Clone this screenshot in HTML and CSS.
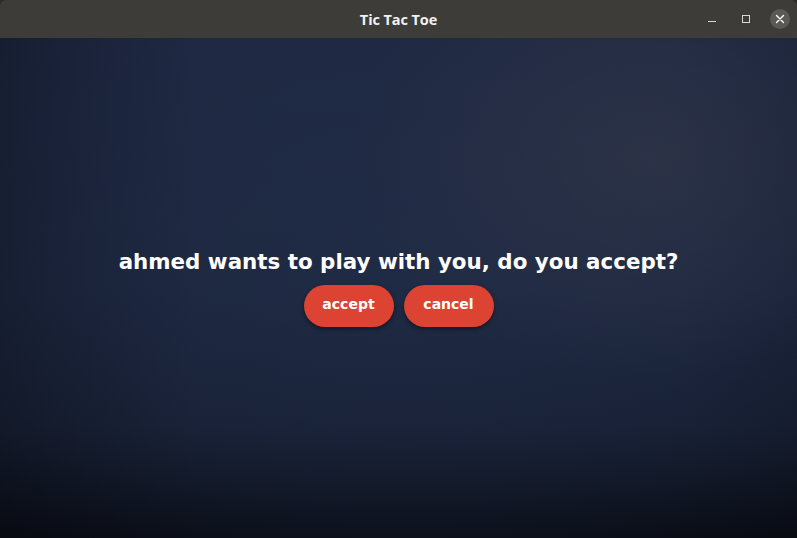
FILE: index.html
```html
<!DOCTYPE html>
<html lang="en">
<head>
<meta charset="utf-8">
<title>Tic Tac Toe</title>
<link rel="stylesheet" href="styles.css">
</head>
<body>
<div class="window">
  <header class="titlebar">
    <span class="title">Tic Tac Toe</span>
    <div class="controls">
      <span class="ctl minimize"><svg width="10" height="10" viewBox="0 0 10 10"><rect x="1" y="7" width="8" height="1" fill="#d8d8d6"/></svg></span>
      <span class="ctl maximize"><svg width="10" height="10" viewBox="0 0 10 10"><rect x="1.5" y="1.5" width="7" height="7" fill="none" stroke="#d8d8d6" stroke-width="1"/></svg></span>
      <span class="ctl close"><svg width="10" height="10" viewBox="0 0 10 10"><path d="M1.5 1.5 L8.5 8.5 M8.5 1.5 L1.5 8.5" stroke="#ffffff" stroke-width="1.4" stroke-linecap="round"/></svg></span>
    </div>
  </header>
  <main class="stage">
    <h1 class="prompt">ahmed wants to play with you, do you accept?</h1>
    <div class="actions">
      <button class="pill">accept</button>
      <button class="pill">cancel</button>
    </div>
  </main>
</div>
</body>
</html>
```

FILE: styles.css
```css
html, body {
  margin: 0;
  padding: 0;
  height: 100%;
  background: #2c2b29;
}
.window {
  height: 538px;
  display: flex;
  flex-direction: column;
  overflow: hidden;
  border-radius: 6px 6px 0 0;
}
.titlebar {
  height: 38px;
  flex: none;
  background: #3d3c39;
  display: flex;
  align-items: center;
  justify-content: center;
  position: relative;
}
.title {
  font-family: "Open Sans", "DejaVu Sans", sans-serif;
  font-weight: 700;
  font-size: 14.5px;
  color: #f2f2f2;
  letter-spacing: -0.1px;
  padding-top: 1px;
}
.controls {
  position: absolute;
  right: 7px;
  top: 0;
  height: 38px;
  display: flex;
  align-items: center;
  gap: 14px;
}
.ctl {
  width: 20px;
  height: 20px;
  display: flex;
  align-items: center;
  justify-content: center;
}
.close {
  background: #5b5a57;
  border-radius: 50%;
}
.stage {
  flex: 1;
  display: flex;
  flex-direction: column;
  align-items: center;
  justify-content: center;
  gap: 11px;
  background:
    radial-gradient(ellipse 300px 220px at 650px 120px, rgba(60,62,75,0.45), rgba(60,62,75,0) 100%),
    radial-gradient(ellipse 520px 380px at 400px 230px, rgba(34,46,74,0.55), rgba(34,46,74,0) 100%),
    linear-gradient(90deg, rgba(8,10,18,0.35) 0%, rgba(8,10,18,0) 25%, rgba(8,10,18,0) 85%, rgba(8,10,18,0.15) 100%),
    linear-gradient(180deg, #1e2842 0%, #1c263e 50%, #161e31 78%, #080b12 100%);
}
.prompt {
  margin: 0;
  font-family: "DejaVu Sans", sans-serif;
  font-weight: 700;
  font-size: 21.4px;
  color: #ffffff;
  line-height: 24px;
}
.actions {
  display: flex;
  gap: 10px;
}
.pill {
  width: 90px;
  height: 42px;
  border: none;
  border-radius: 21px;
  background: #dc4332;
  color: #ffffff;
  font-family: "DejaVu Sans", sans-serif;
  font-weight: 700;
  font-size: 14px;
  padding: 0 0 4px;
  box-shadow: 0 2px 4px rgba(0,0,0,0.45);
}
```
